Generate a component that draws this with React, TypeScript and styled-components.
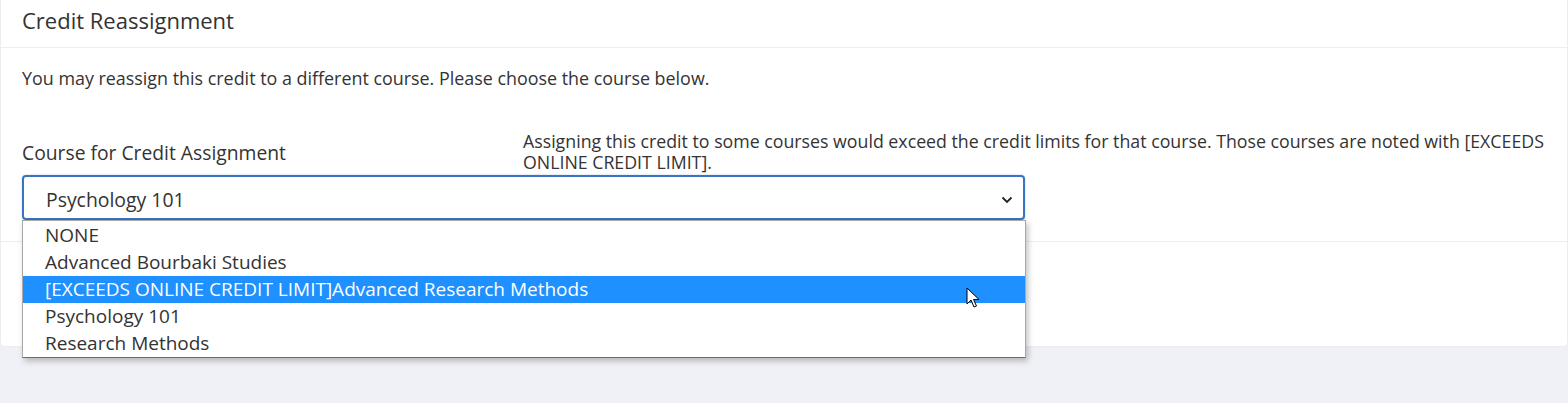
import React from "react";
import styled, { createGlobalStyle } from "styled-components";

const Global = createGlobalStyle`
  html, body { margin: 0; padding: 0; background: #f0f1f6; }
  body { font-family: "Open Sans", "Noto Sans", sans-serif; color: #333; }
`;

const Page = styled.div`
  width: 1568px;
  height: 403px;
  background: #f0f1f6;
  overflow: hidden;
  position: relative;
`;

const Card = styled.section`
  background: #fff;
  border: 1px solid #ebedf0;
  border-top: none;
  border-radius: 0 0 5px 5px;
  box-sizing: border-box;
  width: 1568px;
`;

const CardHeader = styled.header`
  padding: 5px 21px 12px;
  border-bottom: 1px solid #eceef1;
`;

const Title = styled.h2`
  margin: 0;
  font-size: 22px;
  font-weight: 400;
  line-height: 30px;
  color: #333;
`;

const CardBody = styled.div`
  padding: 17px 21px 21px;
  border-bottom: 1px solid #eceef1;
`;

const Intro = styled.p`
  margin: 0 0 40px;
  font-size: 17.9px;
  line-height: 26px;
  color: #333;
`;

const FieldRow = styled.div`
  display: flex;
  align-items: flex-start;
`;

const Label = styled.label`
  width: 501px;
  flex: none;
  padding-top: 8px;
  font-size: 19.3px;
  line-height: 28px;
  color: #333;
`;

const Note = styled.p`
  margin: 0;
  font-size: 17.75px;
  line-height: 21px;
  color: #333;
`;

const SelectWrap = styled.div`
  position: relative;
  margin-top: 2px;
  width: 1003px;
`;

const SelectBox = styled.div`
  box-sizing: border-box;
  height: 45px;
  border: 2px solid #3a73c2;
  border-radius: 4px;
  display: flex;
  align-items: center;
  justify-content: space-between;
  padding: 3px 9px 0 22px;
  font-size: 19.4px;
  color: #333;
  box-shadow: 0 0 2px rgba(58, 115, 194, 0.4);
`;

const CardFooter = styled.div`
  height: 104px;
`;

const ListBox = styled.ul`
  position: absolute;
  left: 0;
  top: 45px;
  width: 1004px;
  margin: 0;
  padding: 1px 0 0;
  list-style: none;
  background: #fff;
  border: 1px solid #a9a9a9;
  border-bottom-color: #6e6e6e;
  box-sizing: border-box;
  box-shadow: 2px 3px 6px rgba(0, 0, 0, 0.25);
`;

const Option = styled.li<{ $active?: boolean }>`
  height: 27px;
  line-height: 27px;
  padding-left: 22px;
  font-size: 19px;
  color: ${(p) => (p.$active ? "#fff" : "#333")};
  background: ${(p) => (p.$active ? "#1e90ff" : "transparent")};
`;

const Cursor = styled.svg`
  position: absolute;
  left: 966px;
  top: 287px;
`;

const options = [
  "NONE",
  "Advanced Bourbaki Studies",
  "[EXCEEDS ONLINE CREDIT LIMIT]Advanced Research Methods",
  "Psychology 101",
  "Research Methods",
];

export default function App() {
  return (
    <Page>
      <Global />
      <Card>
        <CardHeader>
          <Title>Credit Reassignment</Title>
        </CardHeader>
        <CardBody>
          <Intro>
            You may reassign this credit to a different course. Please choose the course below.
          </Intro>
          <FieldRow>
            <Label>Course for Credit Assignment</Label>
            <Note>
              Assigning this credit to some courses would exceed the credit limits for that course. Those
              courses are noted with [EXCEEDS ONLINE CREDIT LIMIT].
            </Note>
          </FieldRow>
          <SelectWrap>
            <SelectBox>
              <span>Psychology 101</span>
              <svg width="14" height="9" viewBox="0 0 14 9">
                <path d="M2.5 2.5 L7 7 L11.5 2.5" fill="none" stroke="#222" strokeWidth="1.8" />
              </svg>
            </SelectBox>
            <ListBox>
              {options.map((o, i) => (
                <Option key={o} $active={i === 2}>
                  {o}
                </Option>
              ))}
            </ListBox>
          </SelectWrap>
        </CardBody>
        <CardFooter />
      </Card>
      <Cursor width="16" height="24" viewBox="0 0 16 24">
        <path
          d="M1 1 L1 17 L5 13 L8 20 L10.5 19 L7.5 12.5 L13 12.5 Z"
          fill="#fff"
          stroke="#000"
          strokeWidth="1"
          strokeLinejoin="round"
        />
      </Cursor>
    </Page>
  );
}
